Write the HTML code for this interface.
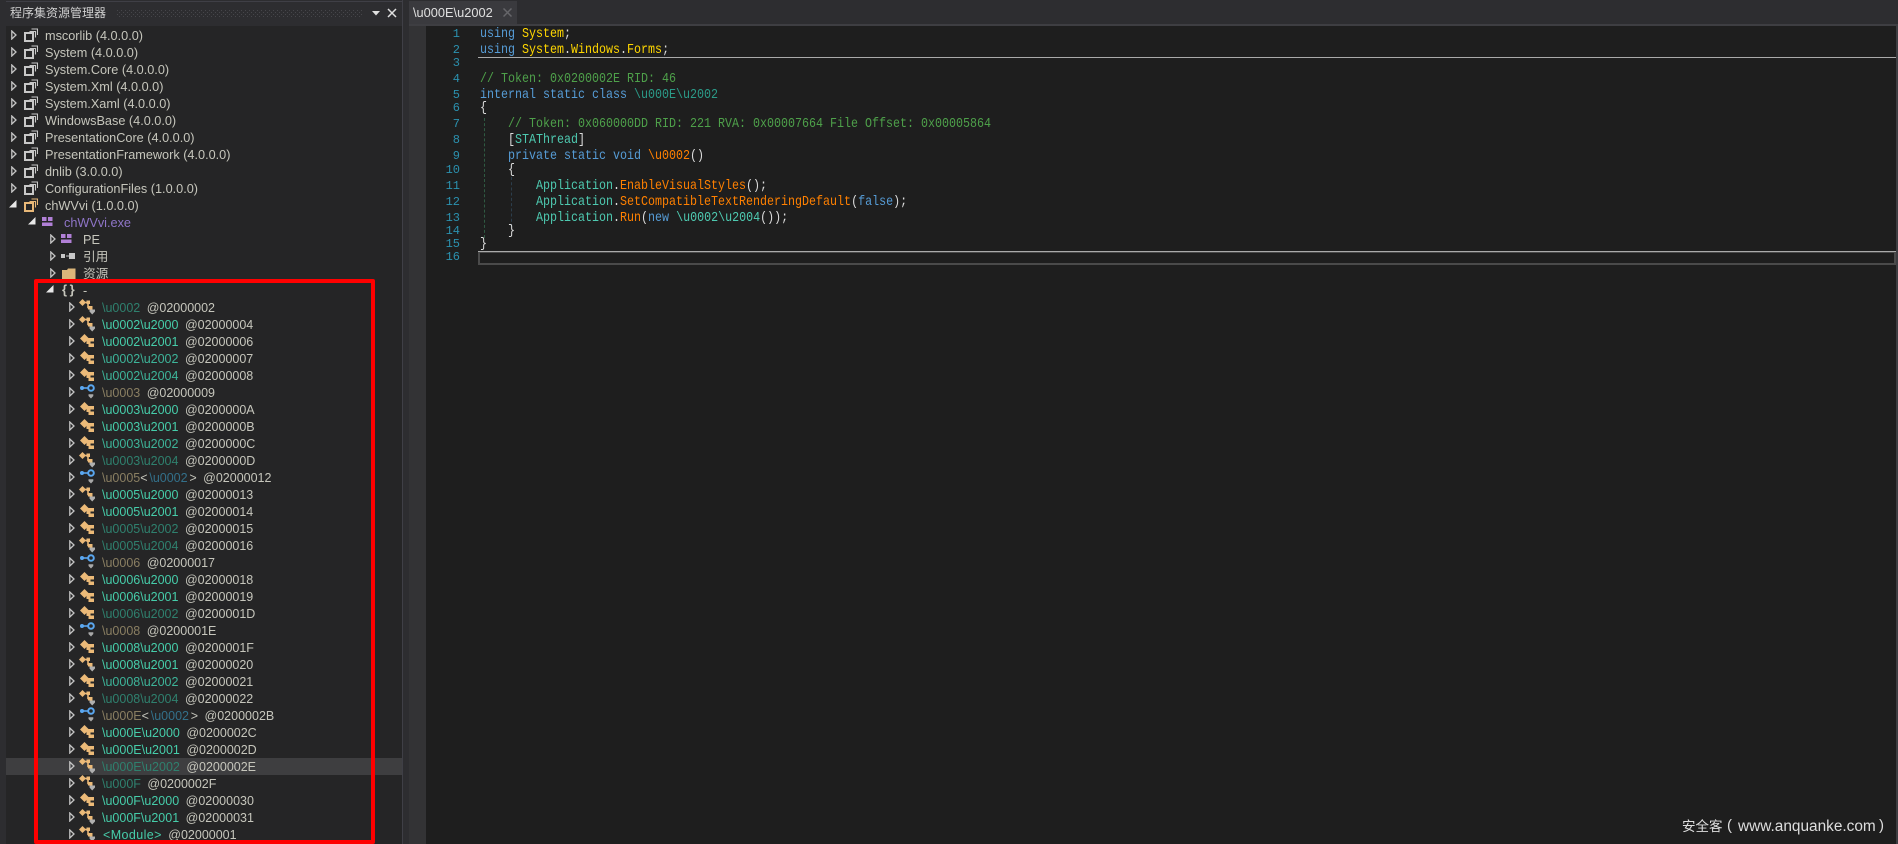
<!DOCTYPE html>
<html lang="zh"><head><meta charset="utf-8"><title>dnSpy</title>
<style>
html,body{margin:0;padding:0;background:#2d2d30;width:1898px;height:844px;overflow:hidden}
body{position:relative;font-family:"Liberation Sans","Noto Sans CJK SC",sans-serif}
.abs{position:absolute}
#panel{position:absolute;left:6px;top:26px;width:396px;height:818px;background:#252526}
.r{position:absolute;left:0;width:402px;height:16px;padding-top:1px;line-height:17px;font-size:12.7px;color:#c6c6bc;white-space:pre;box-sizing:content-box}
.r svg{position:absolute;overflow:visible}
.l0{padding-left:45px;width:357px}.l1{padding-left:64px;width:338px}.l2{padding-left:83px;width:319px}.l3{padding-left:102px;width:300px;font-size:12.5px;word-spacing:3px}
.a0,.a1,.a2,.a3{width:6px;height:10px;top:3px}
.a0{left:11px}.a1{left:28px}.a2{left:50px}.a3{left:69px}
.i{top:0;left:79px}
.b{color:#46cdaa}.m{color:#3db499}.d{color:#2f806e}.n{color:#8a7f62}.g{color:#33708a;margin:0 1.8px}
.sel{background:#3e3e40;left:6px;width:396px;height:17px;padding:0}
.c{position:absolute;left:480px;height:14px;line-height:14px;font-family:"Liberation Mono",monospace;font-size:14px;transform:scaleX(.8333);transform-origin:0 0;white-space:pre;color:#dcdcdc}
.ln{position:absolute;width:30px;left:430px;text-align:right;height:14px;line-height:14px;font-family:"Liberation Mono",monospace;font-size:12px;color:#2b91af}
.k{color:#569cd6}.y{color:#ffd700}.cm{color:#4ea04a}.t{color:#4ec9b0}.o{color:#ff8000}.dt{color:#2b9a88}
</style></head><body>
<svg width="0" height="0" style="position:absolute"><defs>
<symbol id="ah" viewBox="0 0 6 10" width="6" height="10"><path d="M.8 1v8L5 5z" fill="none" stroke="#c4c4c4" stroke-width="1.3"/></symbol>
<symbol id="af" viewBox="0 0 8 8" width="8" height="8"><path d="M7.500 0v7.500H0z" fill="#e8e8e8"/></symbol>
<symbol id="as" viewBox="0 0 14 14" width="14" height="14"><path d="M5.500 3.500h6v6M7.500 1h6v6" fill="none" stroke="#c8c8c8" stroke-width="1.100"/><rect x="1" y="5" width="8" height="8" fill="none" stroke="#c8c8c8" stroke-width="2"/></symbol>
<symbol id="ao" viewBox="0 0 14 14" width="14" height="14"><path d="M5.500 3.500h6v6M7.500 1h6v6" fill="none" stroke="#e8b878" stroke-width="1.100"/><rect x="1" y="5" width="8" height="8" fill="none" stroke="#e8b878" stroke-width="2"/></symbol>
<symbol id="ca" viewBox="0 0 16 16" width="16" height="16"><path d="M0 3.500L3.500 0 7 3.500 3.500 7z" fill="#ecba78"/><path d="M6 3.500h3v5h3" fill="none" stroke="#ecba78" stroke-width="1.600"/><path d="M7.500 1.500h3.500v3.500H7.500zM9 7h4.500v3.500H9z" fill="#ecba78"/><path d="M10.500 10.500h5.500v2L13.200 15.500 10.500 12.500z" fill="#b0b0b0"/></symbol>
<symbol id="cb" viewBox="0 0 16 16" width="16" height="16"><path d="M1 5.500L5.500 1 10 5.500 5.500 10z" fill="#ecba78"/><path d="M8 5h7v3.500h-3.500v2H15V14H9.500v-3H7.500V8z" fill="#ecba78"/></symbol>
<symbol id="if" viewBox="0 0 16 16" width="16" height="16"><circle cx="3" cy="4" r="2" fill="#5aa7f0"/><path d="M3 4h6" stroke="#5aa7f0" stroke-width="1.600"/><circle cx="12" cy="4" r="2.800" fill="none" stroke="#5aa7f0" stroke-width="2"/><path d="M9.500 10.200h4.800v1.800L12 14.500l-2.500-2.500z" fill="#a8a8a8"/></symbol>
<symbol id="md" viewBox="0 0 11 10" width="11" height="10"><path d="M0 0h4.500v4H0zM6 0h4.500v4H6zM0 5.500h10.500V9H0z" fill="#b180d7"/></symbol>
<symbol id="rf" viewBox="0 0 15 8" width="15" height="8"><path d="M0 2h4v4H0zM5 3.500h3v1H5zM8 1h6v6H8z" fill="#c8c8c8"/></symbol>
<symbol id="fd" viewBox="0 0 14 12" width="14" height="12"><path d="M0 2h5l1-1.500h7.500V11.500H0z" fill="#dcb67a"/></symbol>
<pattern id="dots" width="4" height="4" patternUnits="userSpaceOnUse"><rect x="0" y="0" width="1" height="1" fill="#46464a"/><rect x="2" y="2" width="1" height="1" fill="#46464a"/></pattern>
</defs></svg>

<!-- panel title -->
<div class="abs" style="left:6px;top:1px;width:396px;height:1px;background:#3f3f46"></div>
<div class="abs" style="left:10px;top:4px;height:18px;line-height:18px;font-size:12px;color:#d0d0d0;font-family:'Liberation Sans','Noto Sans CJK SC',sans-serif">程序集资源管理器</div>
<svg class="abs" style="left:117px;top:10px" width="245" height="7"><rect width="245" height="7" fill="url(#dots)"/></svg>
<svg class="abs" style="left:372px;top:11px" width="8" height="5"><path d="M0 0h8L4 4.500z" fill="#e0e0e0"/></svg>
<svg class="abs" style="left:387px;top:8px" width="10" height="10"><path d="M1 1l8 8M9 1l-8 8" stroke="#e0e0e0" stroke-width="1.500"/></svg>
<div id="panel"></div>
<div class="abs" style="left:402px;top:0;width:1px;height:844px;background:#3f3f46"></div>

<!-- tree -->
<div class="r sel" style="top:758px"></div>
<div class="r l0" style="top:27px"><svg class="a0"><use href="#ah"/></svg><svg style="left:24px;top:1px" width="14" height="14"><use href="#as"/></svg>mscorlib (4.0.0.0)</div>
<div class="r l0" style="top:44px"><svg class="a0"><use href="#ah"/></svg><svg style="left:24px;top:1px" width="14" height="14"><use href="#as"/></svg>System (4.0.0.0)</div>
<div class="r l0" style="top:61px"><svg class="a0"><use href="#ah"/></svg><svg style="left:24px;top:1px" width="14" height="14"><use href="#as"/></svg>System.Core (4.0.0.0)</div>
<div class="r l0" style="top:78px"><svg class="a0"><use href="#ah"/></svg><svg style="left:24px;top:1px" width="14" height="14"><use href="#as"/></svg>System.Xml (4.0.0.0)</div>
<div class="r l0" style="top:95px"><svg class="a0"><use href="#ah"/></svg><svg style="left:24px;top:1px" width="14" height="14"><use href="#as"/></svg>System.Xaml (4.0.0.0)</div>
<div class="r l0" style="top:112px"><svg class="a0"><use href="#ah"/></svg><svg style="left:24px;top:1px" width="14" height="14"><use href="#as"/></svg>WindowsBase (4.0.0.0)</div>
<div class="r l0" style="top:129px"><svg class="a0"><use href="#ah"/></svg><svg style="left:24px;top:1px" width="14" height="14"><use href="#as"/></svg>PresentationCore (4.0.0.0)</div>
<div class="r l0" style="top:146px"><svg class="a0"><use href="#ah"/></svg><svg style="left:24px;top:1px" width="14" height="14"><use href="#as"/></svg>PresentationFramework (4.0.0.0)</div>
<div class="r l0" style="top:163px"><svg class="a0"><use href="#ah"/></svg><svg style="left:24px;top:1px" width="14" height="14"><use href="#as"/></svg>dnlib (3.0.0.0)</div>
<div class="r l0" style="top:180px"><svg class="a0"><use href="#ah"/></svg><svg style="left:24px;top:1px" width="14" height="14"><use href="#as"/></svg>ConfigurationFiles (1.0.0.0)</div>
<div class="r l0" style="top:197px"><svg style="left:9px;top:3px" width="8" height="8"><use href="#af"/></svg><svg style="left:24px;top:1px" width="14" height="14"><use href="#ao"/></svg>chWVvi (1.0.0.0)</div>
<div class="r l1" style="top:214px;color:#8f75c8"><svg style="left:28px;top:3px" width="8" height="8"><use href="#af"/></svg><svg style="left:42px;top:3px" width="11" height="10"><use href="#md"/></svg>chWVvi.exe</div>
<div class="r l2" style="top:231px"><svg class="a2"><use href="#ah"/></svg><svg style="left:61px;top:3px" width="11" height="10"><use href="#md"/></svg>PE</div>
<div class="r l2" style="top:248px"><svg class="a2"><use href="#ah"/></svg><svg style="left:61px;top:4px" width="15" height="8"><use href="#rf"/></svg>引用</div>
<div class="r l2" style="top:265px"><svg class="a2"><use href="#ah"/></svg><svg style="left:62px;top:3px" width="14" height="12"><use href="#fd"/></svg>资源</div>
<div class="r l2" style="top:282px"><svg style="left:46px;top:3px" width="8" height="8"><use href="#af"/></svg><span class="abs" style="left:62px;top:-1px;font-weight:bold;font-size:13px;word-spacing:-1px">{ }</span>-</div>

<div class="r l3" style="top:299px"><svg class="a3"><use href="#ah"/></svg><svg class="i" width="16" height="16"><use href="#ca"/></svg><span class="d">\u0002</span> @02000002</div>
<div class="r l3" style="top:316px"><svg class="a3"><use href="#ah"/></svg><svg class="i" width="16" height="16"><use href="#ca"/></svg><span class="b">\u0002\u2000</span> @02000004</div>
<div class="r l3" style="top:333px"><svg class="a3"><use href="#ah"/></svg><svg class="i" width="16" height="16"><use href="#cb"/></svg><span class="b">\u0002\u2001</span> @02000006</div>
<div class="r l3" style="top:350px"><svg class="a3"><use href="#ah"/></svg><svg class="i" width="16" height="16"><use href="#cb"/></svg><span class="m">\u0002\u2002</span> @02000007</div>
<div class="r l3" style="top:367px"><svg class="a3"><use href="#ah"/></svg><svg class="i" width="16" height="16"><use href="#cb"/></svg><span class="m">\u0002\u2004</span> @02000008</div>
<div class="r l3" style="top:384px"><svg class="a3"><use href="#ah"/></svg><svg class="i" width="16" height="16"><use href="#if"/></svg><span class="n">\u0003</span> @02000009</div>
<div class="r l3" style="top:401px"><svg class="a3"><use href="#ah"/></svg><svg class="i" width="16" height="16"><use href="#cb"/></svg><span class="b">\u0003\u2000</span> @0200000A</div>
<div class="r l3" style="top:418px"><svg class="a3"><use href="#ah"/></svg><svg class="i" width="16" height="16"><use href="#cb"/></svg><span class="b">\u0003\u2001</span> @0200000B</div>
<div class="r l3" style="top:435px"><svg class="a3"><use href="#ah"/></svg><svg class="i" width="16" height="16"><use href="#cb"/></svg><span class="m">\u0003\u2002</span> @0200000C</div>
<div class="r l3" style="top:452px"><svg class="a3"><use href="#ah"/></svg><svg class="i" width="16" height="16"><use href="#ca"/></svg><span class="d">\u0003\u2004</span> @0200000D</div>
<div class="r l3" style="top:469px"><svg class="a3"><use href="#ah"/></svg><svg class="i" width="16" height="16"><use href="#if"/></svg><span class="n">\u0005</span>&lt;<span class="g">\u0002</span>&gt; @02000012</div>
<div class="r l3" style="top:486px"><svg class="a3"><use href="#ah"/></svg><svg class="i" width="16" height="16"><use href="#ca"/></svg><span class="b">\u0005\u2000</span> @02000013</div>
<div class="r l3" style="top:503px"><svg class="a3"><use href="#ah"/></svg><svg class="i" width="16" height="16"><use href="#cb"/></svg><span class="b">\u0005\u2001</span> @02000014</div>
<div class="r l3" style="top:520px"><svg class="a3"><use href="#ah"/></svg><svg class="i" width="16" height="16"><use href="#cb"/></svg><span class="d">\u0005\u2002</span> @02000015</div>
<div class="r l3" style="top:537px"><svg class="a3"><use href="#ah"/></svg><svg class="i" width="16" height="16"><use href="#ca"/></svg><span class="d">\u0005\u2004</span> @02000016</div>
<div class="r l3" style="top:554px"><svg class="a3"><use href="#ah"/></svg><svg class="i" width="16" height="16"><use href="#if"/></svg><span class="n">\u0006</span> @02000017</div>
<div class="r l3" style="top:571px"><svg class="a3"><use href="#ah"/></svg><svg class="i" width="16" height="16"><use href="#cb"/></svg><span class="b">\u0006\u2000</span> @02000018</div>
<div class="r l3" style="top:588px"><svg class="a3"><use href="#ah"/></svg><svg class="i" width="16" height="16"><use href="#cb"/></svg><span class="b">\u0006\u2001</span> @02000019</div>
<div class="r l3" style="top:605px"><svg class="a3"><use href="#ah"/></svg><svg class="i" width="16" height="16"><use href="#cb"/></svg><span class="d">\u0006\u2002</span> @0200001D</div>
<div class="r l3" style="top:622px"><svg class="a3"><use href="#ah"/></svg><svg class="i" width="16" height="16"><use href="#if"/></svg><span class="n">\u0008</span> @0200001E</div>
<div class="r l3" style="top:639px"><svg class="a3"><use href="#ah"/></svg><svg class="i" width="16" height="16"><use href="#cb"/></svg><span class="b">\u0008\u2000</span> @0200001F</div>
<div class="r l3" style="top:656px"><svg class="a3"><use href="#ah"/></svg><svg class="i" width="16" height="16"><use href="#ca"/></svg><span class="b">\u0008\u2001</span> @02000020</div>
<div class="r l3" style="top:673px"><svg class="a3"><use href="#ah"/></svg><svg class="i" width="16" height="16"><use href="#cb"/></svg><span class="m">\u0008\u2002</span> @02000021</div>
<div class="r l3" style="top:690px"><svg class="a3"><use href="#ah"/></svg><svg class="i" width="16" height="16"><use href="#ca"/></svg><span class="d">\u0008\u2004</span> @02000022</div>
<div class="r l3" style="top:707px"><svg class="a3"><use href="#ah"/></svg><svg class="i" width="16" height="16"><use href="#if"/></svg><span class="n">\u000E</span>&lt;<span class="g">\u0002</span>&gt; @0200002B</div>
<div class="r l3" style="top:724px"><svg class="a3"><use href="#ah"/></svg><svg class="i" width="16" height="16"><use href="#cb"/></svg><span class="b">\u000E\u2000</span> @0200002C</div>
<div class="r l3" style="top:741px"><svg class="a3"><use href="#ah"/></svg><svg class="i" width="16" height="16"><use href="#cb"/></svg><span class="b">\u000E\u2001</span> @0200002D</div>
<div class="r l3" style="top:758px"><svg class="a3"><use href="#ah"/></svg><svg class="i" width="16" height="16"><use href="#ca"/></svg><span class="d">\u000E\u2002</span> @0200002E</div>
<div class="r l3" style="top:775px"><svg class="a3"><use href="#ah"/></svg><svg class="i" width="16" height="16"><use href="#ca"/></svg><span class="d">\u000F</span> @0200002F</div>
<div class="r l3" style="top:792px"><svg class="a3"><use href="#ah"/></svg><svg class="i" width="16" height="16"><use href="#cb"/></svg><span class="b">\u000F\u2000</span> @02000030</div>
<div class="r l3" style="top:809px"><svg class="a3"><use href="#ah"/></svg><svg class="i" width="16" height="16"><use href="#ca"/></svg><span class="b">\u000F\u2001</span> @02000031</div>
<div class="r l3" style="top:826px;padding-left:103px;width:299px"><svg class="a3"><use href="#ah"/></svg><svg class="i" width="16" height="16"><use href="#ca"/></svg><span class="b" style="letter-spacing:.4px">&lt;Module&gt;</span> @02000001</div>

<!-- red highlight -->
<div class="abs" style="left:34px;top:279px;width:333px;height:557px;border:4px solid #f00;border-radius:2px"></div>

<!-- tab -->
<div class="abs" style="left:409px;top:1px;width:108px;height:23px;background:#3a3a3e"></div>
<div class="abs" style="left:413px;top:4px;height:17px;line-height:17px;font-size:12.8px;color:#e0e0e0;white-space:pre">\u000E\u2002</div>
<svg class="abs" style="left:503px;top:8px" width="9" height="9"><path d="M.5.5l8 8M8.500.5l-8 8" stroke="#66666a" stroke-width="1.500"/></svg>
<div class="abs" style="left:409px;top:24px;width:1489px;height:2px;background:#3e3e42"></div>

<!-- editor -->
<div class="abs" style="left:409px;top:26px;width:17px;height:818px;background:#333335"></div>
<div class="abs" style="left:426px;top:26px;width:1470px;height:818px;background:#1e1e1e"></div>
<div class="abs" style="left:1896px;top:26px;width:2px;height:818px;background:#3e3e42"></div>

<!-- guides -->
<div class="abs" style="left:484px;top:118px;width:0;height:120px;border-left:1px dashed #2f5a42"></div>
<div class="abs" style="left:511px;top:177px;width:0;height:50px;border-left:1px dashed #2c3e4c"></div>

<!-- highlights -->
<div class="abs" style="left:478px;top:57px;width:1418px;height:1px;background:#aaa"></div>
<div class="abs" style="left:478px;top:251px;width:1418px;height:1px;background:#aaa"></div>
<div class="abs" style="left:478px;top:252px;width:1414px;height:10px;border:2px solid #4a4a4a;border-top-width:1px"></div>

<!-- line numbers -->
<div class="ln" style="top:27px">1</div>
<div class="ln" style="top:43px">2</div>
<div class="ln" style="top:56px">3</div>
<div class="ln" style="top:72px">4</div>
<div class="ln" style="top:88px">5</div>
<div class="ln" style="top:101px">6</div>
<div class="ln" style="top:117px">7</div>
<div class="ln" style="top:133px">8</div>
<div class="ln" style="top:149px">9</div>
<div class="ln" style="top:163px">10</div>
<div class="ln" style="top:179px">11</div>
<div class="ln" style="top:195px">12</div>
<div class="ln" style="top:211px">13</div>
<div class="ln" style="top:224px">14</div>
<div class="ln" style="top:237px">15</div>
<div class="ln" style="top:250px">16</div>

<!-- code -->
<div class="c" style="top:27px"><span class="k">using</span> <span class="y">System</span>;</div>
<div class="c" style="top:43px"><span class="k">using</span> <span class="y">System</span>.<span class="y">Windows</span>.<span class="y">Forms</span>;</div>
<div class="c" style="top:72px;color:#4ea04a">// Token: 0x0200002E RID: 46</div>
<div class="c" style="top:88px"><span class="k">internal static class</span> <span class="dt">\u000E\u2002</span></div>
<div class="c" style="top:101px">{</div>
<div class="c" style="top:117px;color:#4ea04a">    // Token: 0x060000DD RID: 221 RVA: 0x00007664 File Offset: 0x00005864</div>
<div class="c" style="top:133px">    [<span class="t">STAThread</span>]</div>
<div class="c" style="top:149px">    <span class="k">private static void</span> <span class="o">\u0002</span>()</div>
<div class="c" style="top:163px">    {</div>
<div class="c" style="top:179px">        <span class="t">Application</span>.<span class="o">EnableVisualStyles</span>();</div>
<div class="c" style="top:195px">        <span class="t">Application</span>.<span class="o">SetCompatibleTextRenderingDefault</span>(<span class="k">false</span>);</div>
<div class="c" style="top:211px">        <span class="t">Application</span>.<span class="o">Run</span>(<span class="k">new</span> <span class="t">\u0002\u2004</span>());</div>
<div class="c" style="top:224px">    }</div>
<div class="c" style="top:237px">}</div>

<!-- watermark -->
<div class="abs" style="left:1682px;top:816px;height:18px;line-height:18px;font-size:13.5px;color:#dedede;font-family:'Noto Sans CJK SC',sans-serif">安全客</div>
<div class="abs" style="left:1727px;top:817px;height:18px;line-height:18px;font-size:15px;color:#dedede">(</div>
<div class="abs" style="left:1738px;top:818px;height:18px;line-height:18px;font-size:15.4px;color:#dedede;white-space:pre">www.anquanke.com</div>
<div class="abs" style="left:1879px;top:817px;height:18px;line-height:18px;font-size:15px;color:#dedede">)</div>
</body></html>
